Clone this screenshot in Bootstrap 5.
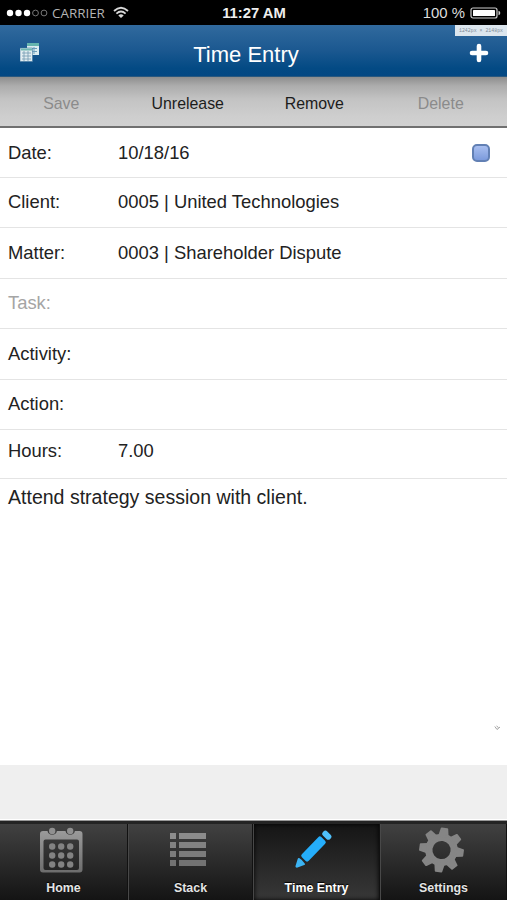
<!DOCTYPE html>
<html lang="en">
<head>
<meta charset="utf-8">
<meta name="viewport" content="width=device-width, initial-scale=1">
<title>Time Entry</title>
<link href="https://cdn.jsdelivr.net/npm/bootstrap@5.3.0/dist/css/bootstrap.min.css" rel="stylesheet">
<style>
body{font-family:"Liberation Sans",Arial,sans-serif;color:#222;background:#efefef;height:900px;overflow:hidden}
.status{height:25px;background:#000;color:#ddd;flex:none;padding:0 5px 0 6px}
.status>div{flex:1 1 0}
.carrier{font:13.4px/25px "Open Sans",sans-serif;color:#b4b4b4;margin:1px 0 0 3px}
.clock{font-size:14.8px;font-weight:700;color:#eee;padding-top:1px}
.pct{font-size:14.9px;margin-right:5px;padding-top:2px;line-height:23px}
.topbar{height:52px;flex:none;background:linear-gradient(#316a9e,#1b5890 50%,#034a84 85%,#044883);border-bottom:1px solid #29587f;padding:0 18px 0 20px}
.page-title{font-size:22px;color:#fff;margin:8px 17px 0 0;font-weight:400;line-height:26px}
.dims{right:0;top:25px;width:52px;height:11px;background:#dce6ee;color:#7c8b98;font:4.9px/11px "Liberation Mono",monospace;text-align:center;white-space:nowrap}
.tools{height:51px;flex:none;background:linear-gradient(#8d8d8d,#acacac 18%,#c3c3c3 45%,#cecece 80%,#d1d1d1);border-bottom:2px solid #707070;padding:3px 3px 0 0}
.tools .btn{font-size:15.9px;border:0;border-radius:0;padding:0;color:#1c1c1c;flex:1 1 0;line-height:48px}
.tools .btn:first-child{margin-left:-2px}
.tools .btn:disabled{color:#8b8b8b;opacity:1}
.entry{height:637px;flex:none;background:#fff}
.list-group-flush>.field{border:0;border-bottom:1px solid #e4e4e4;border-radius:0;padding:0 17px 0 8px;font-size:18.4px;line-height:24px;height:50.5px;color:#222;background:none}
.list-group-flush>.field.first{height:49.5px;padding-top:1px}
.list-group-flush>.field.hours.list-group-item{height:48.5px;padding-bottom:6px;border-bottom-width:1px}
.list-group-flush>.field.off{color:#a5a5a5}
.field-name{width:110px}
.note{font-size:19.55px;line-height:24px;padding:6px 8px}
.swatch{width:18px;height:18px;border:2px solid #6280b4;border-radius:5px;background:linear-gradient(#a9bff0,#7c9bdc)}
.grip{margin:auto 6px 34px auto}
.tabs{height:79px;flex:none;border-top:3px solid #242424;background:linear-gradient(#414141,#141414);box-shadow:0 -1px #999,0 -2px #fff}
.tab-item{flex:0 0 127px;color:#e4e4e4;text-decoration:none;font-size:12.4px;font-weight:700;line-height:15px;border-left:1px solid #484848;border-right:1px solid #111;text-shadow:0 -1px 1px #000;padding-bottom:4px}
.tab-item:nth-child(2){flex-basis:125px}
.tab-item:nth-child(4){flex-basis:127px}
.tab-item.active{background:linear-gradient(#151515,#383838);color:#fff;box-shadow:inset 0 0 5px #000}
.tab-item:first-child{border-left:0;flex-basis:128px}
.tab-item svg{margin:0 5px 7px 0}
</style>
<script src="https://cdn.jsdelivr.net/npm/bootstrap@5.3.0/dist/js/bootstrap.bundle.min.js"></script>
</head>
<body class="d-flex flex-column position-relative m-0">
<div class="status d-flex align-items-center">
  <div class="d-flex align-items-center">
    <svg width="43" height="12" viewBox="0 0 43 12"><g fill="#fff"><circle cx="4" cy="6" r="3.2"/><circle cx="12.5" cy="6" r="3.2"/><circle cx="21" cy="6" r="3.2"/></g><g fill="none" stroke="#777"><circle cx="29.5" cy="6" r="2.9"/><circle cx="38" cy="6" r="2.9"/></g></svg>
    <span class="carrier">CARRIER</span>
    <svg class="ms-2" width="16" height="13" viewBox="0 0 16 13" fill="none" stroke="#d8d8d8" stroke-width="1.8"><path d="M1 5Q8-1.5 15 5M3.4 7.6Q8 3.5 12.6 7.6"/><path d="M5.3 9.4Q8 7.2 10.7 9.4L8 12Z" fill="#d8d8d8" stroke="none"/></svg>
  </div>
  <span class="clock">11:27 AM</span>
  <div class="d-flex align-items-center justify-content-end">
    <span class="pct">100 %</span>
    <svg width="32" height="12" viewBox="0 0 32 12"><rect x="1" y="1" width="26" height="10" rx="2" fill="none" stroke="#ccc" stroke-width="1.2"/><rect x="3" y="3" width="22" height="6" rx=".6" fill="#fff"/><path d="M28.5 3.8q1.8.4 1.8 2.2t-1.8 2.2z" fill="#ccc"/></svg>
  </div>
</div>
<header class="topbar d-flex align-items-center justify-content-between">
  <svg class="mt-1" width="20" height="20" viewBox="0 0 20 20"><path d="M7 0h12v12H7z" fill="#dcecf0"/><path d="M7 0h12v3H7z" fill="#65b4ae"/><path d="M10 5.5h7M10 8.5h7M14 4v7" stroke="#6b9dba"/><path d="M0 5h12.5v13.500H0z" fill="#e2edf1" stroke="#3e759d" stroke-width=".6"/><path d="M1 5.500h11v2H1z" fill="#6eb7b1"/><path d="M2 10h9M2 13h9M2 16h9M4 8v10M8 8v10" stroke="#7299b1" stroke-width=".8"/></svg>
  <h1 class="page-title">Time Entry</h1>
  <svg class="mt-1" width="20" height="20" viewBox="0 0 20 20"><path d="M10 3v14M3 10h14" stroke="#fff" stroke-width="4.600" stroke-linecap="round"/></svg>
</header>
<span class="dims position-absolute">1242px × 2148px</span>
<div class="tools d-flex">
  <button class="btn" disabled>Save</button><button class="btn">Unrelease</button><button class="btn">Remove</button><button class="btn" disabled>Delete</button>
</div>
<main class="entry d-flex flex-column">
  <div class="list-group list-group-flush">
    <div class="field first list-group-item d-flex align-items-center"><span class="field-name">Date:</span><span>10/18/16</span><span class="swatch ms-auto"></span></div>
    <div class="field list-group-item d-flex align-items-center"><span class="field-name">Client:</span><span>0005 | United Technologies</span></div>
    <div class="field list-group-item d-flex align-items-center"><span class="field-name">Matter:</span><span>0003 | Shareholder Dispute</span></div>
    <div class="field off list-group-item d-flex align-items-center"><span class="field-name">Task:</span></div>
    <div class="field list-group-item d-flex align-items-center"><span class="field-name">Activity:</span></div>
    <div class="field list-group-item d-flex align-items-center"><span class="field-name">Action:</span></div>
    <div class="field hours list-group-item d-flex align-items-center"><span class="field-name">Hours:</span><span>7.00</span></div>
  </div>
  <div class="note">Attend strategy session with client.</div>
  <svg class="grip" width="7" height="7" viewBox="0 0 7 7" fill="none" stroke="#999" stroke-width=".9"><path d="M.8 2.5 3 5.5 6 3M2.500 2l2 1.500"/></svg>
</main>
<div class="flex-grow-1"></div>
<nav class="tabs d-flex">
  <a class="tab-item d-flex flex-column align-items-center justify-content-end" href="#">
    <svg width="44" height="48" viewBox="0 0 44 48"><defs><linearGradient id="metal" x2="0" y2="1"><stop stop-color="#9a9a9a"/><stop offset="1" stop-color="#6d6d6d"/></linearGradient></defs><path fill="url(#metal)" fill-rule="evenodd" d="M4 5H8.500a4.800 4.800 0 0 0 9.400 0H26.500a4.800 4.800 0 0 0 9.400 0H40.500a3 3 0 0 1 3 3V43.500a3 3 0 0 1-3 3H4a3 3 0 0 1-3-3V8a3 3 0 0 1 3-3ZM6.500 13.500a2 2 0 0 0-2 2V42a2 2 0 0 0 2 2H38a2 2 0 0 0 2-2V15.500a2 2 0 0 0-2-2Z"/><g fill="#909090"><circle cx="13.200" cy="5" r="3.200"/><circle cx="31.200" cy="5" r="3.200"/></g><g fill="#828282"><circle cx="13.200" cy="20.500" r="3.200"/><circle cx="22.200" cy="20.500" r="3.200"/><circle cx="31.200" cy="20.500" r="3.200"/><circle cx="13.200" cy="29.500" r="3.200"/><circle cx="22.200" cy="29.500" r="3.200"/><circle cx="31.200" cy="29.500" r="3.200"/><circle cx="13.200" cy="38.500" r="3.200"/><circle cx="22.200" cy="38.500" r="3.200"/><circle cx="31.200" cy="38.500" r="3.200"/></g></svg>
    <span>Home</span></a>
  <a class="tab-item d-flex flex-column align-items-center justify-content-end" href="#">
    <svg width="36" height="48" viewBox="0 0 36 48"><path fill="#8c8c8c" d="M0 7h6v6H0zM9 7h27v6H9z"/><path fill="#828282" d="M0 16h6v6H0zM9 16h27v6H9z"/><path fill="#7b7b7b" d="M0 25h6v6H0zM9 25h27v6H9z"/><path fill="#727272" d="M0 34h6v6H0zM9 34h27v6H9z"/></svg>
    <span>Stack</span></a>
  <a class="tab-item active d-flex flex-column align-items-center justify-content-end" href="#">
    <svg width="38" height="48" viewBox="0 0 38 48"><g transform="translate(18.500 23) rotate(-46)"><rect x="-14" y="-4.800" width="28" height="9.600" rx="2.200" fill="#25aefb"/><rect x="16.200" y="-5" width="6" height="10" rx="2.700" fill="#4fc0fa"/><path d="M-16.500-4Q-15.500 0-16.500 4-17 5-18 4.500L-25 1Q-26 0-25-1L-18-4.500Q-17-5-16.500-4Z" fill="#3cb4f3"/></g></svg>
    <span>Time Entry</span></a>
  <a class="tab-item d-flex flex-column align-items-center justify-content-end" href="#">
    <svg width="46" height="48" viewBox="0 0 46 48"><g transform="translate(23.500 24) rotate(8)" fill="none" stroke="#858585"><circle r="12.700" stroke-width="7.200"/><g fill="#858585" stroke-width="2" stroke-linejoin="round"><path id="cog" d="M-4.200-14-2.800-21.300H2.800L4.200-14Z"/><use href="#cog" transform="rotate(45)"/><use href="#cog" transform="rotate(90)"/><use href="#cog" transform="rotate(135)"/><use href="#cog" transform="rotate(180)"/><use href="#cog" transform="rotate(225)"/><use href="#cog" transform="rotate(270)"/><use href="#cog" transform="rotate(315)"/></g></g></svg>
    <span>Settings</span></a>
</nav>
</body>
</html>
